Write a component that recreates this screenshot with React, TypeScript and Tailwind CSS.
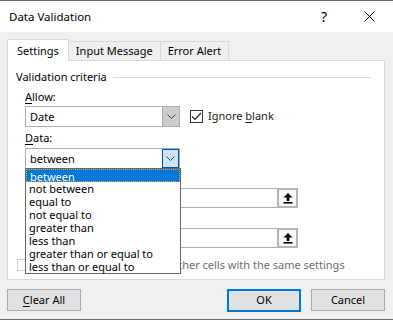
import React from 'react';

const FONT = { fontFamily: '"Segoe UI", "Noto Sans", "Open Sans", sans-serif' };

const OPTIONS = [
  'between',
  'not between',
  'equal to',
  'not equal to',
  'greater than',
  'less than',
  'greater than or equal to',
  'less than or equal to',
];

function Chevron() {
  return (
    <svg width="9" height="5" viewBox="0 0 9 5" fill="none">
      <path d="M0.5 0.5 L4.5 4.5 L8.5 0.5" stroke="#444" strokeWidth="1" />
    </svg>
  );
}

function Combo({ value, active }: { value: string; active?: boolean }) {
  return (
    <div className="flex h-[21px] w-[155px] border border-[#adadad] bg-white">
      <div className="flex-1 pl-[4px] leading-[19px]">{value}</div>
      <div
        className={`flex w-[17px] items-center justify-center ${
          active ? 'border border-[#005499] bg-[#cce4f7]' : 'border-l border-[#adadad] bg-[#cccccc]'
        }`}
      >
        <Chevron />
      </div>
    </div>
  );
}

function RefInput() {
  return (
    <div className="flex h-[20px] w-[273px] border border-[#adadad] bg-white">
      <div className="flex-1" />
      <div className="-my-px -mr-px flex w-[21px] items-center justify-center border-[2px] border-[#b4b4b4] bg-[#f7f7f7]">
        <svg width="10" height="11" viewBox="0 0 10 11">
          <path d="M5 0 L9.5 4.5 L6.3 4.5 L6.3 8 L3.7 8 L3.7 4.5 L0.5 4.5 Z" fill="#000" />
          <rect x="0.5" y="9" width="9" height="1.6" fill="#000" />
        </svg>
      </div>
    </div>
  );
}

function Tab({ label, active }: { label: string; active?: boolean }) {
  return active ? (
    <div className="relative z-10 -mb-px h-[22px] border border-b-0 border-[#d9d9d9] bg-white px-[9px] leading-[21px]">
      {label}
    </div>
  ) : (
    <div className="mt-[2px] h-[19px] border border-l-0 border-b-0 border-[#d9d9d9] bg-[#f0f0f0] px-[7px] leading-[18px]">
      {label}
    </div>
  );
}

export default function App() {
  return (
    <div
      className="flex h-[320px] w-[393px] flex-col border-t border-b border-[#6b6b6b] bg-[#f0f0f0] text-[11px] text-black"
      style={FONT}
    >
      {/* Title bar */}
      <div className="flex h-[31px] items-center bg-white">
        <div className="pl-[9px] text-[11.5px] leading-[16px]">Data Validation</div>
        <div className="ml-auto w-[12px] text-center text-[14px] leading-[16px]">?</div>
        <div className="ml-[34px] mr-[18px] flex items-center">
          <svg width="11" height="11" viewBox="0 0 11 11">
            <path d="M0.5 0.5 L10.5 10.5 M10.5 0.5 L0.5 10.5" stroke="#000" strokeWidth="1" />
          </svg>
        </div>
      </div>

      <div className="flex flex-1 flex-col px-[7px] pt-[7px]">
        {/* Tabs */}
        <div className="flex">
          <Tab label="Settings" active />
          <Tab label="Input Message" />
          <Tab label="Error Alert" />
        </div>

        {/* Panel */}
        <div className="relative h-[220px] w-[378px] border border-[#d9d9d9] bg-white px-[8px] pt-[8px]">
          <div className="flex h-[16px] items-center">
            <span className="leading-[16px]">Validation criteria</span>
            <div className="ml-[6px] mr-[5px] h-px flex-1 bg-[#dcdcdc]" />
          </div>

          <div className="ml-[9px]">
            <div className="mt-[4px] leading-[16px]">
              <span className="underline underline-offset-2">A</span>llow:
            </div>
            <div className="mt-[1px] flex items-center">
              <Combo value="Date" />
              <div className="ml-[10px] flex h-[13px] w-[13px] items-center justify-center border border-[#333] bg-white">
                <svg width="11" height="9" viewBox="0 0 11 9">
                  <path d="M1 4.5 L4 7.5 L10 1" stroke="#222" strokeWidth="1.2" fill="none" />
                </svg>
              </div>
              <span className="ml-[5px] text-[#1a1a1a]">
                Ignore <span className="underline underline-offset-2">b</span>lank
              </span>
            </div>

            <div className="mt-[3px] leading-[16px]">
              <span className="underline underline-offset-2">D</span>ata:
            </div>
            <div className="mt-[2px]">
              <div className="h-[20px] overflow-hidden">
                <Combo value="between" active />
              </div>
            </div>

            <div className="mt-[2px] leading-[16px]">
              <span className="underline underline-offset-2">S</span>tart date:
            </div>
            <div className="mt-[2px]">
              <RefInput />
            </div>
            <div className="mt-[2px] leading-[16px]">
              <span className="underline underline-offset-2">E</span>nd date:
            </div>
            <div className="mt-[2px]">
              <RefInput />
            </div>
          </div>

          <div className="mt-[9px] flex items-center">
            <div className="ml-[1px] h-[12px] w-[12px] border border-[#cccccc] bg-white" />
            <span className="ml-[5px] text-[#6d6d6d]">
              A<span className="underline underline-offset-2">p</span>ply these changes to all other cells with the same settings
            </span>
          </div>

          {/* Open dropdown list */}
          <div className="absolute left-[17px] top-[107px] z-20 w-[156px] border border-[#646464] bg-white">
            {OPTIONS.map((opt, i) => (
              <div
                key={opt}
                className={`h-[13px] pl-[3px] leading-[13px] ${
                  i === 0 ? 'border border-dotted border-[#f0a040] bg-[#0078d7] pl-[2px] leading-[11px] text-white' : ''
                }`}
              >
                {opt}
              </div>
            ))}
          </div>
        </div>

        {/* Buttons */}
        <div className="mt-[9px] flex">
          <button className="h-[22px] w-[74px] border border-[#adadad] bg-[#e1e1e1]">
            <span className="underline underline-offset-2">C</span>lear All
          </button>
          <button className="ml-auto h-[23px] w-[74px] border-[2px] border-[#0078d7] bg-[#e1e1e1]">OK</button>
          <button className="ml-[10px] mr-[1px] h-[22px] w-[74px] border border-[#adadad] bg-[#e1e1e1]">
            Cancel
          </button>
        </div>
      </div>
    </div>
  );
}
